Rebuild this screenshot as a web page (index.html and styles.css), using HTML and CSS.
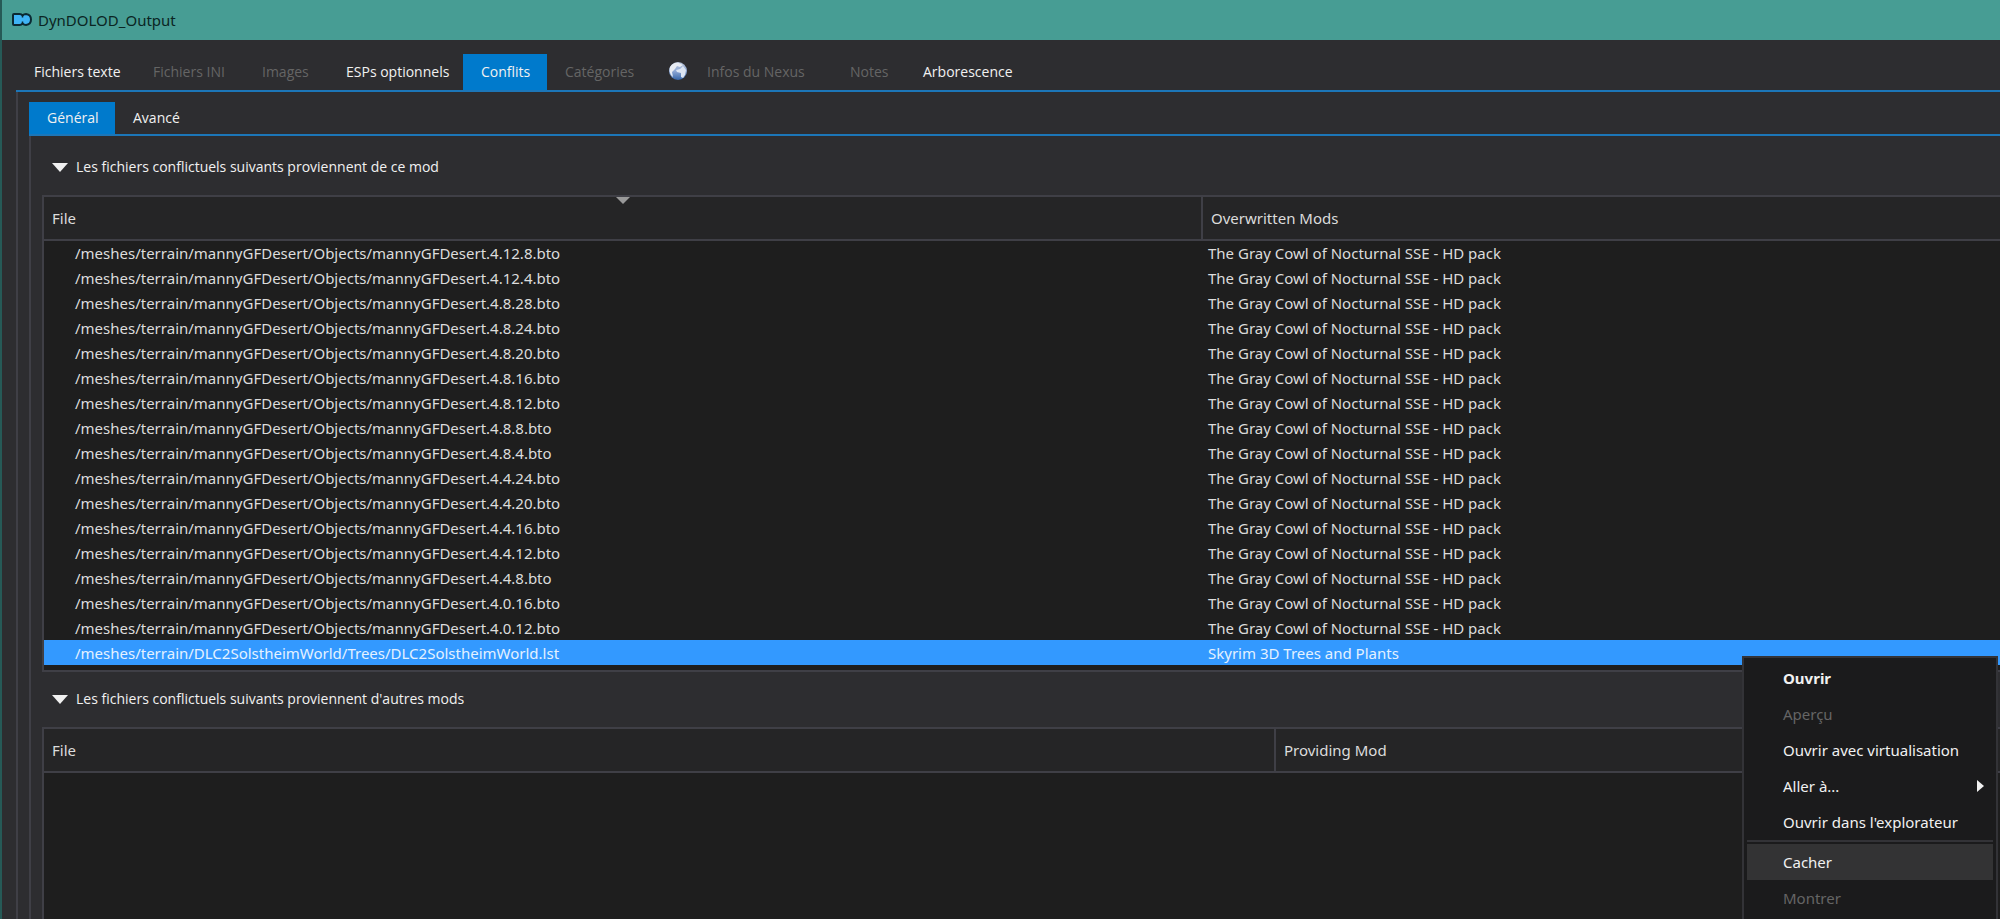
FILE: index.html
```html
<!DOCTYPE html>
<html lang="fr">
<head>
    <meta charset="UTF-8">
    <meta name="viewport" content="width=device-width, initial-scale=1.0">
    <title>DynDOLOD_Output</title>
    <link rel="stylesheet" href="styles.css">
</head>
<body>
    <div class="window">
        <header class="titlebar">
            <svg class="logo" viewBox="0 0 20 14" aria-hidden="true">
                <path d="M1 2q0-1 1-1h5.500q2 0 3 1.500q1.500-1.500 3.500-1.500q5 .5 5 5.500t-5 5.500q-2 0-3.500-1.500q-1 1.500-3 1.500h-5.500q-1 0-1-1z" fill="#3fb4f5" stroke="#0b2a33" stroke-width="2" stroke-linejoin="round"/>
                <path d="M10.500 2.500v2M10.500 8.500v2" stroke="#0b2a33" stroke-width="1.500"/>
            </svg>
            <h1>DynDOLOD_Output</h1>
        </header>

        <nav class="tabs main-tabs">
            <button>Fichiers texte</button>
            <button disabled>Fichiers INI</button>
            <button disabled>Images</button>
            <button>ESPs optionnels</button>
            <button class="active">Conflits</button>
            <button disabled>Catégories</button>
            <button class="with-icon" disabled>
                <svg class="globe" viewBox="0 0 20 20" aria-hidden="true">
                    <defs>
                        <linearGradient id="sea" x1="0" y1="0" x2="0" y2="1">
                            <stop offset="0" stop-color="#b9c4d8"/>
                            <stop offset="0.5" stop-color="#8fa9d6"/>
                            <stop offset="1" stop-color="#3565a8"/>
                        </linearGradient>
                    </defs>
                    <circle cx="10" cy="10" r="9" fill="url(#sea)"/>
                    <path d="M2 6c2-3 5-5 9-4l4 2-3 2-3-1-2 3-3 3 1 5c-3-2-4-6-3-10z" fill="#e8ecf3"/>
                    <path d="M8 9l4-1 3-3 3 4-1 5-2 3-2-1v-4l-4-1z" fill="#dce5f3"/>
                </svg>
                Infos du Nexus
            </button>
            <button disabled>Notes</button>
            <button>Arborescence</button>
        </nav>

        <main class="pane">
            <nav class="tabs sub-tabs">
                <button class="active">Général</button>
                <button>Avancé</button>
            </nav>

            <div class="pane sub-pane">
                <button class="expander">
                    <svg class="arrow" viewBox="0 0 16 9" aria-hidden="true"><path d="M0 0h16l-8 9z"/></svg>
                    Les fichiers conflictuels suivants proviennent de ce mod
                </button>
                <div class="list">
                    <table class="overwritten">
                        <thead>
                            <tr>
                                <th class="sorted">File</th>
                                <th>Overwritten Mods</th>
                            </tr>
                        </thead>
                        <tbody>
                            <tr><td>/meshes/terrain/mannyGFDesert/Objects/mannyGFDesert.4.12.8.bto</td><td>The Gray Cowl of Nocturnal SSE - HD pack</td></tr>
                            <tr><td>/meshes/terrain/mannyGFDesert/Objects/mannyGFDesert.4.12.4.bto</td><td>The Gray Cowl of Nocturnal SSE - HD pack</td></tr>
                            <tr><td>/meshes/terrain/mannyGFDesert/Objects/mannyGFDesert.4.8.28.bto</td><td>The Gray Cowl of Nocturnal SSE - HD pack</td></tr>
                            <tr><td>/meshes/terrain/mannyGFDesert/Objects/mannyGFDesert.4.8.24.bto</td><td>The Gray Cowl of Nocturnal SSE - HD pack</td></tr>
                            <tr><td>/meshes/terrain/mannyGFDesert/Objects/mannyGFDesert.4.8.20.bto</td><td>The Gray Cowl of Nocturnal SSE - HD pack</td></tr>
                            <tr><td>/meshes/terrain/mannyGFDesert/Objects/mannyGFDesert.4.8.16.bto</td><td>The Gray Cowl of Nocturnal SSE - HD pack</td></tr>
                            <tr><td>/meshes/terrain/mannyGFDesert/Objects/mannyGFDesert.4.8.12.bto</td><td>The Gray Cowl of Nocturnal SSE - HD pack</td></tr>
                            <tr><td>/meshes/terrain/mannyGFDesert/Objects/mannyGFDesert.4.8.8.bto</td><td>The Gray Cowl of Nocturnal SSE - HD pack</td></tr>
                            <tr><td>/meshes/terrain/mannyGFDesert/Objects/mannyGFDesert.4.8.4.bto</td><td>The Gray Cowl of Nocturnal SSE - HD pack</td></tr>
                            <tr><td>/meshes/terrain/mannyGFDesert/Objects/mannyGFDesert.4.4.24.bto</td><td>The Gray Cowl of Nocturnal SSE - HD pack</td></tr>
                            <tr><td>/meshes/terrain/mannyGFDesert/Objects/mannyGFDesert.4.4.20.bto</td><td>The Gray Cowl of Nocturnal SSE - HD pack</td></tr>
                            <tr><td>/meshes/terrain/mannyGFDesert/Objects/mannyGFDesert.4.4.16.bto</td><td>The Gray Cowl of Nocturnal SSE - HD pack</td></tr>
                            <tr><td>/meshes/terrain/mannyGFDesert/Objects/mannyGFDesert.4.4.12.bto</td><td>The Gray Cowl of Nocturnal SSE - HD pack</td></tr>
                            <tr><td>/meshes/terrain/mannyGFDesert/Objects/mannyGFDesert.4.4.8.bto</td><td>The Gray Cowl of Nocturnal SSE - HD pack</td></tr>
                            <tr><td>/meshes/terrain/mannyGFDesert/Objects/mannyGFDesert.4.0.16.bto</td><td>The Gray Cowl of Nocturnal SSE - HD pack</td></tr>
                            <tr><td>/meshes/terrain/mannyGFDesert/Objects/mannyGFDesert.4.0.12.bto</td><td>The Gray Cowl of Nocturnal SSE - HD pack</td></tr>
                            <tr class="selected"><td>/meshes/terrain/DLC2SolstheimWorld/Trees/DLC2SolstheimWorld.lst</td><td>Skyrim 3D Trees and Plants</td></tr>
                        </tbody>
                    </table>
                </div>

                <button class="expander">
                    <svg class="arrow" viewBox="0 0 16 9" aria-hidden="true"><path d="M0 0h16l-8 9z"/></svg>
                    Les fichiers conflictuels suivants proviennent d'autres mods
                </button>
                <div class="list fill">
                    <table class="providing">
                        <thead>
                            <tr>
                                <th>File</th>
                                <th>Providing Mod</th>
                            </tr>
                        </thead>
                    </table>
                </div>
            </div>
        </main>
    </div>

    <div class="menu">
        <button class="default">Ouvrir</button>
        <button disabled>Aperçu</button>
        <button>Ouvrir avec virtualisation</button>
        <button class="submenu">Aller à...
            <svg class="chevron" viewBox="0 0 7 12" aria-hidden="true"><path d="M0 0l7 6-7 6z"/></svg>
        </button>
        <button>Ouvrir dans l'explorateur</button>
        <hr>
        <button class="hover">Cacher</button>
        <button disabled>Montrer</button>
    </div>
</body>
</html>
```
FILE: styles.css
```css
* {
    box-sizing: border-box;
}
body {
    margin: 0;
    height: 100vh;
    overflow: hidden;
    background-color: #2d2d30;
    color: #f1f1f1;
    font-family: "Noto Sans", sans-serif;
    font-size: 15px;
    line-height: 24px;
}
button {
    margin: 0;
    padding: 0;
    border: none;
    background: none;
    color: inherit;
    font: inherit;
    text-align: left;
    white-space: nowrap;
}
.window {
    display: flex;
    flex-direction: column;
    height: 100vh;
    border-left: 2px solid #265a57;
}
.titlebar {
    display: flex;
    align-items: center;
    gap: 6px;
    height: 40px;
    padding-left: 10px;
    background-color: #479d94;
    color: #0b2523;
}
.titlebar h1 {
    margin: 0;
    font-size: 15px;
    font-weight: normal;
}
.logo {
    width: 20px;
    height: 14px;
}

/* Tabs */
.tabs {
    display: grid;
    justify-content: start;
    border-bottom: 2px solid #1c76b8;
    font-family: "Open Sans", sans-serif;
    font-size: 14px;
}
.tabs button {
    padding: 0 18px;
}
.tabs button:disabled {
    color: #656565;
}
.tabs .active {
    background-color: #007acc;
}
.main-tabs {
    grid-template-columns: 119px 109px 84px 135px 84px 103px 182px 73px 122px;
    grid-template-rows: 36px;
    margin: 14px 0 0 14px;
}
.sub-tabs {
    grid-template-columns: 86px 82px;
    grid-template-rows: 32px;
}
.with-icon {
    display: flex;
    align-items: center;
    gap: 19px;
}
.globe {
    width: 20px;
    height: 20px;
    margin-bottom: 3px;
}
.pane {
    flex: 1;
    display: flex;
    flex-direction: column;
    margin-left: 14px;
    padding: 10px 0 0 11px;
    border-left: 2px solid #3f3f46;
}
.sub-pane {
    margin-left: 0;
    padding: 11px 0 0 11px;
}

/* Conflict lists */
.expander {
    display: flex;
    align-items: center;
    gap: 8px;
    height: 40px;
    margin-bottom: 8px;
    padding-left: 10px;
    font-family: "Open Sans", sans-serif;
    font-size: 14px;
}
.arrow {
    width: 16px;
    height: 9px;
    fill: #f1f1f1;
}
.list {
    margin-bottom: 7px;
    padding-bottom: 5px;
    border: 2px solid #3f3f46;
    border-right: none;
    background-color: #1e1e1e;
}
.fill {
    flex: 1;
    margin-bottom: 0;
    border-bottom: none;
}
table {
    width: 100%;
    border-collapse: collapse;
    table-layout: fixed;
}
th {
    height: 43px;
    padding: 0 8px;
    border-bottom: 2px solid #3f3f46;
    background-color: #252526;
    color: #dcdcdc;
    font-weight: normal;
    text-align: left;
}
th + th {
    border-left: 2px solid #3f3f46;
}
.overwritten th:first-child {
    width: 1158px;
}
.providing th:first-child {
    width: 1231px;
}
.sorted {
    position: relative;
}
.sorted::after {
    content: "";
    position: absolute;
    top: 0;
    left: 50%;
    margin-left: -7px;
    border: 7px solid transparent;
    border-top-color: #999999;
    border-bottom: none;
}
td {
    height: 25px;
    padding: 0 6px;
    color: #dcdcdc;
    white-space: nowrap;
}
td:first-child {
    padding-left: 31px;
}
.selected td {
    background-color: #3399ff;
    color: #e4f1ff;
}

/* Context menu */
.menu {
    position: absolute;
    top: 656px;
    right: 2px;
    display: flex;
    flex-direction: column;
    width: 256px;
    height: 300px;
    padding: 2px 3px;
    border: 2px solid #333337;
    background-color: #1b1b1c;
}
.menu button {
    display: flex;
    align-items: center;
    justify-content: space-between;
    height: 36px;
    padding: 0 9px 0 36px;
}
.menu button:disabled {
    color: #656565;
}
.menu .default {
    font-weight: bold;
}
.menu .hover {
    background-color: #333334;
}
.menu hr {
    width: 100%;
    height: 2px;
    margin: 0 0 2px;
    border: none;
    background-color: #333337;
}
.chevron {
    width: 7px;
    height: 12px;
    fill: #f1f1f1;
}
```
